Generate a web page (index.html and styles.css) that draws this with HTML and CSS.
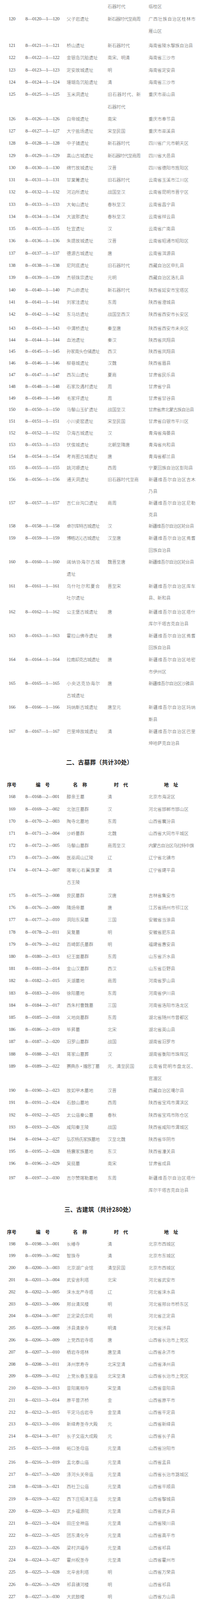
FILE: index.html
```html
<!DOCTYPE html>
<html lang="zh-CN">
<head>
<meta charset="utf-8">
<title>第八批全国重点文物保护单位名单</title>
<link rel="stylesheet" href="styles.css">
</head>
<body>
<div class="page">
  <div class="grp ga">
    <div class="row"><div class="no"></div><div class="code"></div><div class="nm"></div><div class="era">石器时代</div><div class="addr">临桂区</div></div>
    <div class="row"><div class="no">120</div><div class="code">8—0120—1—120</div><div class="nm">父子岩遗址</div><div class="era n8">新石器时代至商周</div><div class="addr"><span class="fill">广西壮族自治区桂林市</span>雁山区</div></div>
    <div class="row gap6"><div class="no">121</div><div class="code">8—0121—1—121</div><div class="nm">桥山遗址</div><div class="era">新石器时代</div><div class="addr">海南省陵水黎族自治县</div></div>
    <div class="row"><div class="no">122</div><div class="code">8—0122—1—122</div><div class="nm">金银岛沉船遗址</div><div class="era">南宋、明清</div><div class="addr">海南省三沙市</div></div>
    <div class="row"><div class="no">123</div><div class="code">8—0123—1—123</div><div class="nm">定安故城遗址</div><div class="era">明</div><div class="addr">海南省定安县</div></div>
    <div class="row"><div class="no">124</div><div class="code">8—0124—1—124</div><div class="nm">珊瑚岛沉船遗址</div><div class="era">清</div><div class="addr">海南省三沙市</div></div>
    <div class="row"><div class="no">125</div><div class="code">8—0125—1—125</div><div class="nm">玉米洞遗址</div><div class="era"><span class="fill">旧石器时代、新</span>石器时代</div><div class="addr">重庆市巫山县</div></div>
    <div class="row"><div class="no">126</div><div class="code">8—0126—1—126</div><div class="nm">白帝城遗址</div><div class="era">南宋</div><div class="addr">重庆市奉节县</div></div>
    <div class="row"><div class="no">127</div><div class="code">8—0127—1—127</div><div class="nm">大宁盐场遗址</div><div class="era">宋至民国</div><div class="addr">重庆市巫溪县</div></div>
    <div class="row"><div class="no">128</div><div class="code">8—0128—1—128</div><div class="nm">中子铺遗址</div><div class="era">新石器时代</div><div class="addr">四川省广元市朝天区</div></div>
    <div class="row"><div class="no">129</div><div class="code">8—0129—1—129</div><div class="nm">高山古城遗址</div><div class="era n8">新石器时代至商周</div><div class="addr">四川省大邑县</div></div>
    <div class="row"><div class="no">130</div><div class="code">8—0130—1—130</div><div class="nm">绵竹故城遗址</div><div class="era">汉晋</div><div class="addr">四川省德阳市旌阳区</div></div>
    <div class="row"><div class="no">131</div><div class="code">8—0131—1—131</div><div class="nm">甘棠箐遗址</div><div class="era">旧石器时代</div><div class="addr">云南省玉溪市江川区</div></div>
    <div class="row"><div class="no">132</div><div class="code">8—0132—1—132</div><div class="nm">河泊所遗址</div><div class="era">战国至汉</div><div class="addr">云南省昆明市晋宁区</div></div>
    <div class="row"><div class="no">133</div><div class="code">8—0133—1—133</div><div class="nm">大甸山遗址</div><div class="era">春秋至汉</div><div class="addr">云南省昌宁县</div></div>
    <div class="row"><div class="no">134</div><div class="code">8—0134—1—134</div><div class="nm">大波那遗址</div><div class="era">春秋至汉</div><div class="addr">云南省祥云县</div></div>
    <div class="row"><div class="no">135</div><div class="code">8—0135—1—135</div><div class="nm">牡宜遗址</div><div class="era">汉</div><div class="addr">云南省广南县</div></div>
    <div class="row"><div class="no">136</div><div class="code">8—0136—1—136</div><div class="nm">朱提故城遗址</div><div class="era">汉晋</div><div class="addr">云南省昭通市昭阳区</div></div>
    <div class="row"><div class="no">137</div><div class="code">8—0137—1—137</div><div class="nm">德源古城遗址</div><div class="era">唐</div><div class="addr">云南省洱源县</div></div>
    <div class="row"><div class="no">138</div><div class="code">8—0138—1—138</div><div class="nm">尼阿底遗址</div><div class="era">旧石器时代</div><div class="addr">西藏自治区申扎县</div></div>
    <div class="row"><div class="no">139</div><div class="code">8—0139—1—139</div><div class="nm">杰顿珠宗遗址</div><div class="era">元明</div><div class="addr">西藏自治区洛扎县</div></div>
    <div class="row"><div class="no">140</div><div class="code">8—0140—1—140</div><div class="nm">芦山峁遗址</div><div class="era">新石器时代</div><div class="addr">陕西省延安市宝塔区</div></div>
    <div class="row"><div class="no">141</div><div class="code">8—0141—1—141</div><div class="nm">刘家洼遗址</div><div class="era">东周</div><div class="addr">陕西省澄城县</div></div>
    <div class="row"><div class="no">142</div><div class="code">8—0142—1—142</div><div class="nm">东马坊遗址</div><div class="era">战国至西汉</div><div class="addr">陕西省西安市长安区</div></div>
  </div>
  <div class="grp gb">
    <div class="row"><div class="no">143</div><div class="code">8—0143—1—143</div><div class="nm">中渭桥遗址</div><div class="era">秦至唐</div><div class="addr">陕西省西安市未央区</div></div>
    <div class="row"><div class="no">144</div><div class="code">8—0144—1—144</div><div class="nm">血池遗址</div><div class="era">秦汉</div><div class="addr">陕西省凤翔县</div></div>
    <div class="row"><div class="no">145</div><div class="code">8—0145—1—145</div><div class="nm n8">孙家南头仓储遗址</div><div class="era">西汉</div><div class="addr">陕西省凤翔县</div></div>
    <div class="row"><div class="no">146</div><div class="code">8—0146—1—146</div><div class="nm">柳巷城遗址</div><div class="era">汉魏</div><div class="addr">陕西省眉县</div></div>
    <div class="row"><div class="no">147</div><div class="code">8—0147—1—147</div><div class="nm">西灰山遗址</div><div class="era">夏商</div><div class="addr">甘肃省民乐县</div></div>
    <div class="row"><div class="no">148</div><div class="code">8—0148—1—148</div><div class="nm">石家及遇村遗址</div><div class="era">周</div><div class="addr">甘肃省宁县</div></div>
    <div class="row"><div class="no">149</div><div class="code">8—0149—1—149</div><div class="nm">毛家坪遗址</div><div class="era">周</div><div class="addr">甘肃省甘谷县</div></div>
    <div class="row"><div class="no">150</div><div class="code">8—0150—1—150</div><div class="nm">马鬃山玉矿遗址</div><div class="era">战国至汉</div><div class="addr a11">甘肃省肃北蒙古族自治县</div></div>
    <div class="row"><div class="no">151</div><div class="code">8—0151—1—151</div><div class="nm">小川瓷窑遗址</div><div class="era">宋至民国</div><div class="addr">甘肃省白银市平川区</div></div>
    <div class="row"><div class="no">152</div><div class="code">8—0152—1—152</div><div class="nm">尕海古城遗址</div><div class="era">汉</div><div class="addr">青海省海晏县</div></div>
    <div class="row"><div class="no">153</div><div class="code">8—0153—1—153</div><div class="nm">伏俟城遗址</div><div class="era">北朝至隋唐</div><div class="addr">青海省共和县</div></div>
    <div class="row"><div class="no">154</div><div class="code">8—0154—1—154</div><div class="nm">考肖图古城遗址</div><div class="era">唐</div><div class="addr">青海省都兰县</div></div>
    <div class="row"><div class="no">155</div><div class="code">8—0155—1—155</div><div class="nm">姚河塬遗址</div><div class="era">西周</div><div class="addr">宁夏回族自治区彭阳县</div></div>
    <div class="row"><div class="no">156</div><div class="code">8—0156—1—156</div><div class="nm">通天洞遗址</div><div class="era">旧石器时代至商</div><div class="addr"><span class="fill">新疆维吾尔自治区吉木</span>乃县</div></div>
    <div class="row"><div class="no">157</div><div class="code">8—0157—1—157</div><div class="nm">吉仁台沟口遗址</div><div class="era">商周</div><div class="addr"><span class="fill">新疆维吾尔自治区尼勒</span>克县</div></div>
    <div class="row"><div class="no">158</div><div class="code">8—0158—1—158</div><div class="nm n8">卓尔库特古城遗址</div><div class="era">汉</div><div class="addr a11">新疆维吾尔自治区轮台县</div></div>
  </div>
  <div class="grp gc">
    <div class="row"><div class="no">159</div><div class="code">8—0159—1—159</div><div class="nm n8">博格达沁古城遗址</div><div class="era">汉至唐</div><div class="addr"><span class="fill">新疆维吾尔自治区焉耆</span>回族自治县</div></div>
    <div class="row"><div class="no">160</div><div class="code">8—0160—1—160</div><div class="nm"><span class="fill">阔纳协海尔古城</span>遗址</div><div class="era">魏晋至唐</div><div class="addr a11">新疆维吾尔自治区轮台县</div></div>
    <div class="row"><div class="no">161</div><div class="code">8—0161—1—161</div><div class="nm"><span class="fill">乌什吐尔和夏合</span>吐尔遗址</div><div class="era">晋至宋</div><div class="addr"><span class="fill">新疆维吾尔自治区库车</span>县、新和县</div></div>
    <div class="row gap5"><div class="no">162</div><div class="code">8—0162—1—162</div><div class="nm">公主堡古城遗址</div><div class="era">唐</div><div class="addr"><span class="fill">新疆维吾尔自治区塔什</span>库尔干塔吉克自治县</div></div>
    <div class="row"><div class="no">163</div><div class="code">8—0163—1—163</div><div class="nm">霍拉山佛寺遗址</div><div class="era">唐</div><div class="addr"><span class="fill">新疆维吾尔自治区焉耆</span>回族自治县</div></div>
    <div class="row"><div class="no">164</div><div class="code">8—0164—1—164</div><div class="nm n8">拉甫却克古城遗址</div><div class="era">唐</div><div class="addr"><span class="fill">新疆维吾尔自治区哈密</span>市伊州区</div></div>
    <div class="row"><div class="no">165</div><div class="code">8—0165—1—165</div><div class="nm"><span class="fill">小央达克协海尔</span>古城遗址</div><div class="era">唐</div><div class="addr a11">新疆维吾尔自治区沙雅县</div></div>
    <div class="row"><div class="no">166</div><div class="code">8—0166—1—166</div><div class="nm">玛纳斯古城遗址</div><div class="era">唐至元</div><div class="addr"><span class="fill">新疆维吾尔自治区玛纳</span>斯县</div></div>
    <div class="row"><div class="no">167</div><div class="code">8—0167—1—167</div><div class="nm">巴里坤故城遗址</div><div class="era">清</div><div class="addr"><span class="fill">新疆维吾尔自治区巴里</span>坤哈萨克自治县</div></div>
  </div>

  <h2 class="sec">二、古墓葬（共计30处）</h2>
  <div class="hdr"><div class="h1">序号</div><div class="h2">编　号</div><div class="h3">名　称</div><div class="h4">时　代</div><div class="h5">地　址</div></div>

  <div class="grp s2">
    <div class="row"><div class="no">168</div><div class="code">8—0168—2—001</div><div class="nm">醇亲王墓</div><div class="era">清</div><div class="addr">北京市海淀区</div></div>
    <div class="row"><div class="no">169</div><div class="code">8—0169—2—002</div><div class="nm">北张庄墓群</div><div class="era">汉</div><div class="addr">河北省邯郸市邯山区</div></div>
    <div class="row"><div class="no">170</div><div class="code">8—0170—2—003</div><div class="nm">陶寺北墓地</div><div class="era">东周</div><div class="addr">山西省襄汾县</div></div>
    <div class="row"><div class="no">171</div><div class="code">8—0171—2—004</div><div class="nm">沙岭墓群</div><div class="era">北魏</div><div class="addr">山西省大同市平城区</div></div>
    <div class="row"><div class="no">172</div><div class="code">8—0172—2—005</div><div class="nm">马鬃山墓群</div><div class="era">商周至汉</div><div class="addr a11">内蒙古自治区乌拉特中旗</div></div>
    <div class="row"><div class="no">173</div><div class="code">8—0173—2—006</div><div class="nm">医巫闾山辽陵</div><div class="era">辽</div><div class="addr">辽宁省北镇市</div></div>
    <div class="row"><div class="no">174</div><div class="code">8—0174—2—007</div><div class="nm"><span class="fill">喀喇沁右翼旗蒙</span>古王陵</div><div class="era">清</div><div class="addr">辽宁省建平县</div></div>
    <div class="row gap3"><div class="no">175</div><div class="code">8—0175—2—008</div><div class="nm">良民墓群</div><div class="era">汉唐</div><div class="addr">吉林省集安市</div></div>
    <div class="row"><div class="no">176</div><div class="code">8—0176—2—009</div><div class="nm">隋炀帝墓</div><div class="era">唐</div><div class="addr">江苏省扬州市邗江区</div></div>
    <div class="row"><div class="no">177</div><div class="code">8—0177—2—010</div><div class="nm">洞阳东吴墓</div><div class="era">三国</div><div class="addr">安徽省当涂县</div></div>
    <div class="row"><div class="no">178</div><div class="code">8—0178—2—011</div><div class="nm">吴复墓</div><div class="era">明</div><div class="addr">安徽省肥东县</div></div>
    <div class="row"><div class="no">179</div><div class="code">8—0179—2—012</div><div class="nm">百崎郭氏墓群</div><div class="era">明</div><div class="addr">福建省惠安县</div></div>
    <div class="row"><div class="no">180</div><div class="code">8—0180—2—013</div><div class="nm">纪王崮墓群</div><div class="era">东周</div><div class="addr">山东省沂水县</div></div>
    <div class="row"><div class="no">181</div><div class="code">8—0181—2—014</div><div class="nm">金山汉墓群</div><div class="era">西汉</div><div class="addr">山东省巨野县</div></div>
    <div class="row"><div class="no">182</div><div class="code">8—0182—2—015</div><div class="nm">天湖墓地</div><div class="era">商周</div><div class="addr">河南省罗山县</div></div>
    <div class="row"><div class="no">183</div><div class="code">8—0183—2—016</div><div class="nm">徐阳墓地</div><div class="era">东周</div><div class="addr">河南省伊川县</div></div>
    <div class="row"><div class="no">184</div><div class="code">8—0184—2—017</div><div class="nm">西朱村曹魏墓</div><div class="era">三国</div><div class="addr">河南省洛阳市洛龙区</div></div>
    <div class="row"><div class="no">185</div><div class="code">8—0185—2—018</div><div class="nm">义地岗墓群</div><div class="era">东周</div><div class="addr">湖北省随州市曾都区</div></div>
    <div class="row"><div class="no">186</div><div class="code">8—0186—2—019</div><div class="nm">毕昇墓</div><div class="era">北宋</div><div class="addr">湖北省英山县</div></div>
    <div class="row"><div class="no">187</div><div class="code">8—0187—2—020</div><div class="nm">汨罗山墓群</div><div class="era">战国</div><div class="addr">湖南省汨罗市</div></div>
    <div class="row"><div class="no">188</div><div class="code">8—0188—2—021</div><div class="nm">蒋家山墓葬</div><div class="era">汉</div><div class="addr">湖南省衡阳市珠晖区</div></div>
    <div class="row"><div class="no">189</div><div class="code">8—0189—2—022</div><div class="nm n8">赛典赤·赡思丁墓</div><div class="era">元、清至民国</div><div class="addr"><span class="fill">云南省昆明市盘龙区、</span>官渡区</div></div>
    <div class="row"><div class="no">190</div><div class="code">8—0190—2—023</div><div class="nm">故如甲木墓地</div><div class="era">汉晋</div><div class="addr">西藏自治区噶尔县</div></div>
    <div class="row"><div class="no">191</div><div class="code">8—0191—2—024</div><div class="nm">石鼓山墓地</div><div class="era">西周</div><div class="addr">陕西省宝鸡市渭滨区</div></div>
    <div class="row"><div class="no">192</div><div class="code">8—0192—2—025</div><div class="nm">太公庙秦公墓</div><div class="era">春秋</div><div class="addr">陕西省宝鸡市陈仓区</div></div>
    <div class="row"><div class="no">193</div><div class="code">8—0193—2—026</div><div class="nm">咸阳秦王陵</div><div class="era">战国</div><div class="addr">陕西省咸阳市渭城区</div></div>
    <div class="row"><div class="no">194</div><div class="code">8—0194—2—027</div><div class="nm n8">弘农杨氏家族墓地</div><div class="era">汉至北魏</div><div class="addr">陕西省华阴市</div></div>
    <div class="row"><div class="no">195</div><div class="code">8—0195—2—028</div><div class="nm">杨震家族墓地</div><div class="era">东汉</div><div class="addr">陕西省潼关县</div></div>
    <div class="row"><div class="no">196</div><div class="code">8—0196—2—029</div><div class="nm">吴挺墓</div><div class="era">南宋</div><div class="addr">甘肃省成县</div></div>
    <div class="row gap5"><div class="no">197</div><div class="code">8—0197—2—030</div><div class="nm">吉尔赞喀勒墓地</div><div class="era">东周</div><div class="addr"><span class="fill">新疆维吾尔自治区塔什</span>库尔干塔吉克自治县</div></div>
  </div>

  <h2 class="sec">三、古建筑（共计280处）</h2>
  <div class="hdr"><div class="h1">序号</div><div class="h2">编　号</div><div class="h3">名　称</div><div class="h4">时　代</div><div class="h5">地　址</div></div>

  <div class="grp s3a">
    <div class="row"><div class="no">198</div><div class="code">8—0198—3—001</div><div class="nm">长椿寺</div><div class="era">清</div><div class="addr">北京市西城区</div></div>
    <div class="row"><div class="no">199</div><div class="code">8—0199—3—002</div><div class="nm">智珠寺</div><div class="era">清</div><div class="addr">北京市东城区</div></div>
    <div class="row"><div class="no">200</div><div class="code">8—0200—3—003</div><div class="nm">北京湖广会馆</div><div class="era">清至民国</div><div class="addr">北京市西城区</div></div>
    <div class="row"><div class="no">201</div><div class="code">8—0201—3—004</div><div class="nm">武安舍利塔</div><div class="era">北宋</div><div class="addr">河北省武安市</div></div>
    <div class="row"><div class="no">202</div><div class="code">8—0202—3—005</div><div class="nm">涞水龙严寺塔</div><div class="era">辽</div><div class="addr">河北省涞水县</div></div>
    <div class="row"><div class="no">203</div><div class="code">8—0203—3—006</div><div class="nm">邢台清风楼</div><div class="era">明</div><div class="addr">河北省邢台市桥东区</div></div>
    <div class="row"><div class="no">204</div><div class="code">8—0204—3—007</div><div class="nm">正定梁氏宗祠</div><div class="era">明</div><div class="addr">河北省正定县</div></div>
    <div class="row"><div class="no">205</div><div class="code">8—0205—3—008</div><div class="nm">涉县清泉寺</div><div class="era">明清</div><div class="addr">河北省涉县</div></div>
    <div class="row"><div class="no">206</div><div class="code">8—0206—3—009</div><div class="nm">上党西岩寺塔</div><div class="era">唐</div><div class="addr">山西省长治市上党区</div></div>
    <div class="row"><div class="no">207</div><div class="code">8—0207—3—010</div><div class="nm">栖岩寺塔林</div><div class="era">唐至清</div><div class="addr">山西省永济市</div></div>
    <div class="row"><div class="no">208</div><div class="code">8—0208—3—011</div><div class="nm">泽州崇寿寺</div><div class="era">北宋至清</div><div class="addr">山西省泽州县</div></div>
    <div class="row"><div class="no">209</div><div class="code">8—0209—3—012</div><div class="nm">上党长春玉皇庙</div><div class="era">北宋至清</div><div class="addr">山西省长治市上党区</div></div>
    <div class="row"><div class="no">210</div><div class="code">8—0210—3—013</div><div class="nm">昔阳离相寺</div><div class="era">宋至清</div><div class="addr">山西省昔阳县</div></div>
    <div class="row"><div class="no">211</div><div class="code">8—0211—3—014</div><div class="nm">原平普济桥</div><div class="era">金</div><div class="addr">山西省原平市</div></div>
    <div class="row"><div class="no">212</div><div class="code">8—0212—3—015</div><div class="nm">平定马齿岩寺</div><div class="era">金至清</div><div class="addr">山西省平定县</div></div>
    <div class="row"><div class="no">213</div><div class="code">8—0213—3—016</div><div class="nm">新绛寿圣寺大殿</div><div class="era">元</div><div class="addr">山西省新绛县</div></div>
    <div class="row"><div class="no">214</div><div class="code">8—0214—3—017</div><div class="nm">长子文庙大成殿</div><div class="era">元</div><div class="addr">山西省长子县</div></div>
    <div class="row"><div class="no">215</div><div class="code">8—0215—3—018</div><div class="nm">峪口圣母庙</div><div class="era">元至清</div><div class="addr">山西省汾阳市</div></div>
  </div>
  <div class="grp s3b">
    <div class="row"><div class="no">216</div><div class="code">8—0216—3—019</div><div class="nm">盂北泰山庙</div><div class="era">元至清</div><div class="addr">山西省盂县</div></div>
    <div class="row"><div class="no">217</div><div class="code">8—0217—3—020</div><div class="nm">涤河头关帝庙</div><div class="era">元至清</div><div class="addr">山西省长治市潞城区</div></div>
    <div class="row"><div class="no">218</div><div class="code">8—0218—3—021</div><div class="nm">西社卫公庙</div><div class="era">元至清</div><div class="addr">山西省平顺县</div></div>
    <div class="row"><div class="no">219</div><div class="code">8—0219—3—022</div><div class="nm">西下庄昭泽王庙</div><div class="era">元至清</div><div class="addr">山西省黎城县</div></div>
    <div class="row"><div class="no">220</div><div class="code">8—0220—3—023</div><div class="nm">武乡福源院</div><div class="era">元至清</div><div class="addr">山西省武乡县</div></div>
    <div class="row"><div class="no">221</div><div class="code">8—0221—3—024</div><div class="nm">田庄全神庙</div><div class="era">元至清</div><div class="addr">山西省陵川县</div></div>
    <div class="row"><div class="no">222</div><div class="code">8—0222—3—025</div><div class="nm">团东清化寺</div><div class="era">元至清</div><div class="addr">山西省高平市</div></div>
    <div class="row"><div class="no">223</div><div class="code">8—0223—3—026</div><div class="nm">梁村洪福寺</div><div class="era">元至清</div><div class="addr">山西省祁县</div></div>
    <div class="row"><div class="no">224</div><div class="code">8—0224—3—027</div><div class="nm">霍州祝圣寺</div><div class="era">元至清</div><div class="addr">山西省霍州市</div></div>
    <div class="row"><div class="no">225</div><div class="code">8—0225—3—028</div><div class="nm">北辛舍利塔</div><div class="era">明</div><div class="addr">山西省万荣县</div></div>
    <div class="row"><div class="no">226</div><div class="code">8—0226—3—029</div><div class="nm">祁县镇河楼</div><div class="era">明</div><div class="addr">山西省祁县</div></div>
    <div class="row"><div class="no">227</div><div class="code">8—0227—3—030</div><div class="nm">大武鼓楼</div><div class="era">明</div><div class="addr">山西省方山县</div></div>
  </div>
</div>
</body>
</html>
```

FILE: styles.css
```css
html, body {
  margin: 0;
  padding: 0;
  background: #ffffff;
}

body {
  width: 513px;
  font-family: "Noto Sans CJK SC", "Noto Sans CJK JP", sans-serif;
  color: #5a5a5a;
}

.page {
  padding-top: 1.4px;
}

.ga { --lh: 31.27px; }
.gb { --lh: 29.8px; margin-top: 5.5px; }
.gc { --lh: 30.6px; }
.s2 { --lh: 31.2px; }
.s3a { --lh: 30.8px; }
.s3b { --lh: 31.27px; margin-top: 5px; }

.row {
  display: grid;
  grid-template-columns: 65px 106px 105px 105px 132px;
  line-height: var(--lh);
  font-size: 11.4px;
  font-weight: 300;
}

.gap3 { margin-top: 3px; }
.gap5 { margin-top: 5px; }
.gap6 { margin-top: 6px; }

.no,
.code {
  font-family: "Liberation Serif", "Times New Roman", serif;
  font-size: 12.5px;
  font-weight: 400;
  letter-spacing: -0.55px;
  white-space: nowrap;
  color: #555;
}

.no {
  padding-left: 22px;
}

.nm,
.era,
.addr {
  white-space: nowrap;
}

.fill {
  display: block;
  text-align: justify;
  text-align-last: justify;
}

.nm .fill,
.era .fill {
  width: 85px;
}

.addr .fill {
  width: 120.5px;
}

.n8 { letter-spacing: -0.9px; }
.a11 { letter-spacing: -0.85px; }

.sec {
  margin: 17.5px 0 0 0;
  padding-right: 3px;
  font-size: 15.3px;
  font-weight: 700;
  line-height: 30px;
  text-align: center;
  color: #222;
}

.hdr {
  display: grid;
  grid-template-columns: 65px 106px 105px 105px 132px;
  margin-top: 29px;
  font-size: 12px;
  font-weight: 700;
  line-height: 30px;
  color: #1a1a1a;
  white-space: nowrap;
}

.h1 { padding-left: 18px; }
.h2 { padding-left: 26.7px; }
.h3 { padding-left: 16.3px; }
.h4 { padding-left: 16.3px; }
.h5 { padding-left: 39.7px; }
```
